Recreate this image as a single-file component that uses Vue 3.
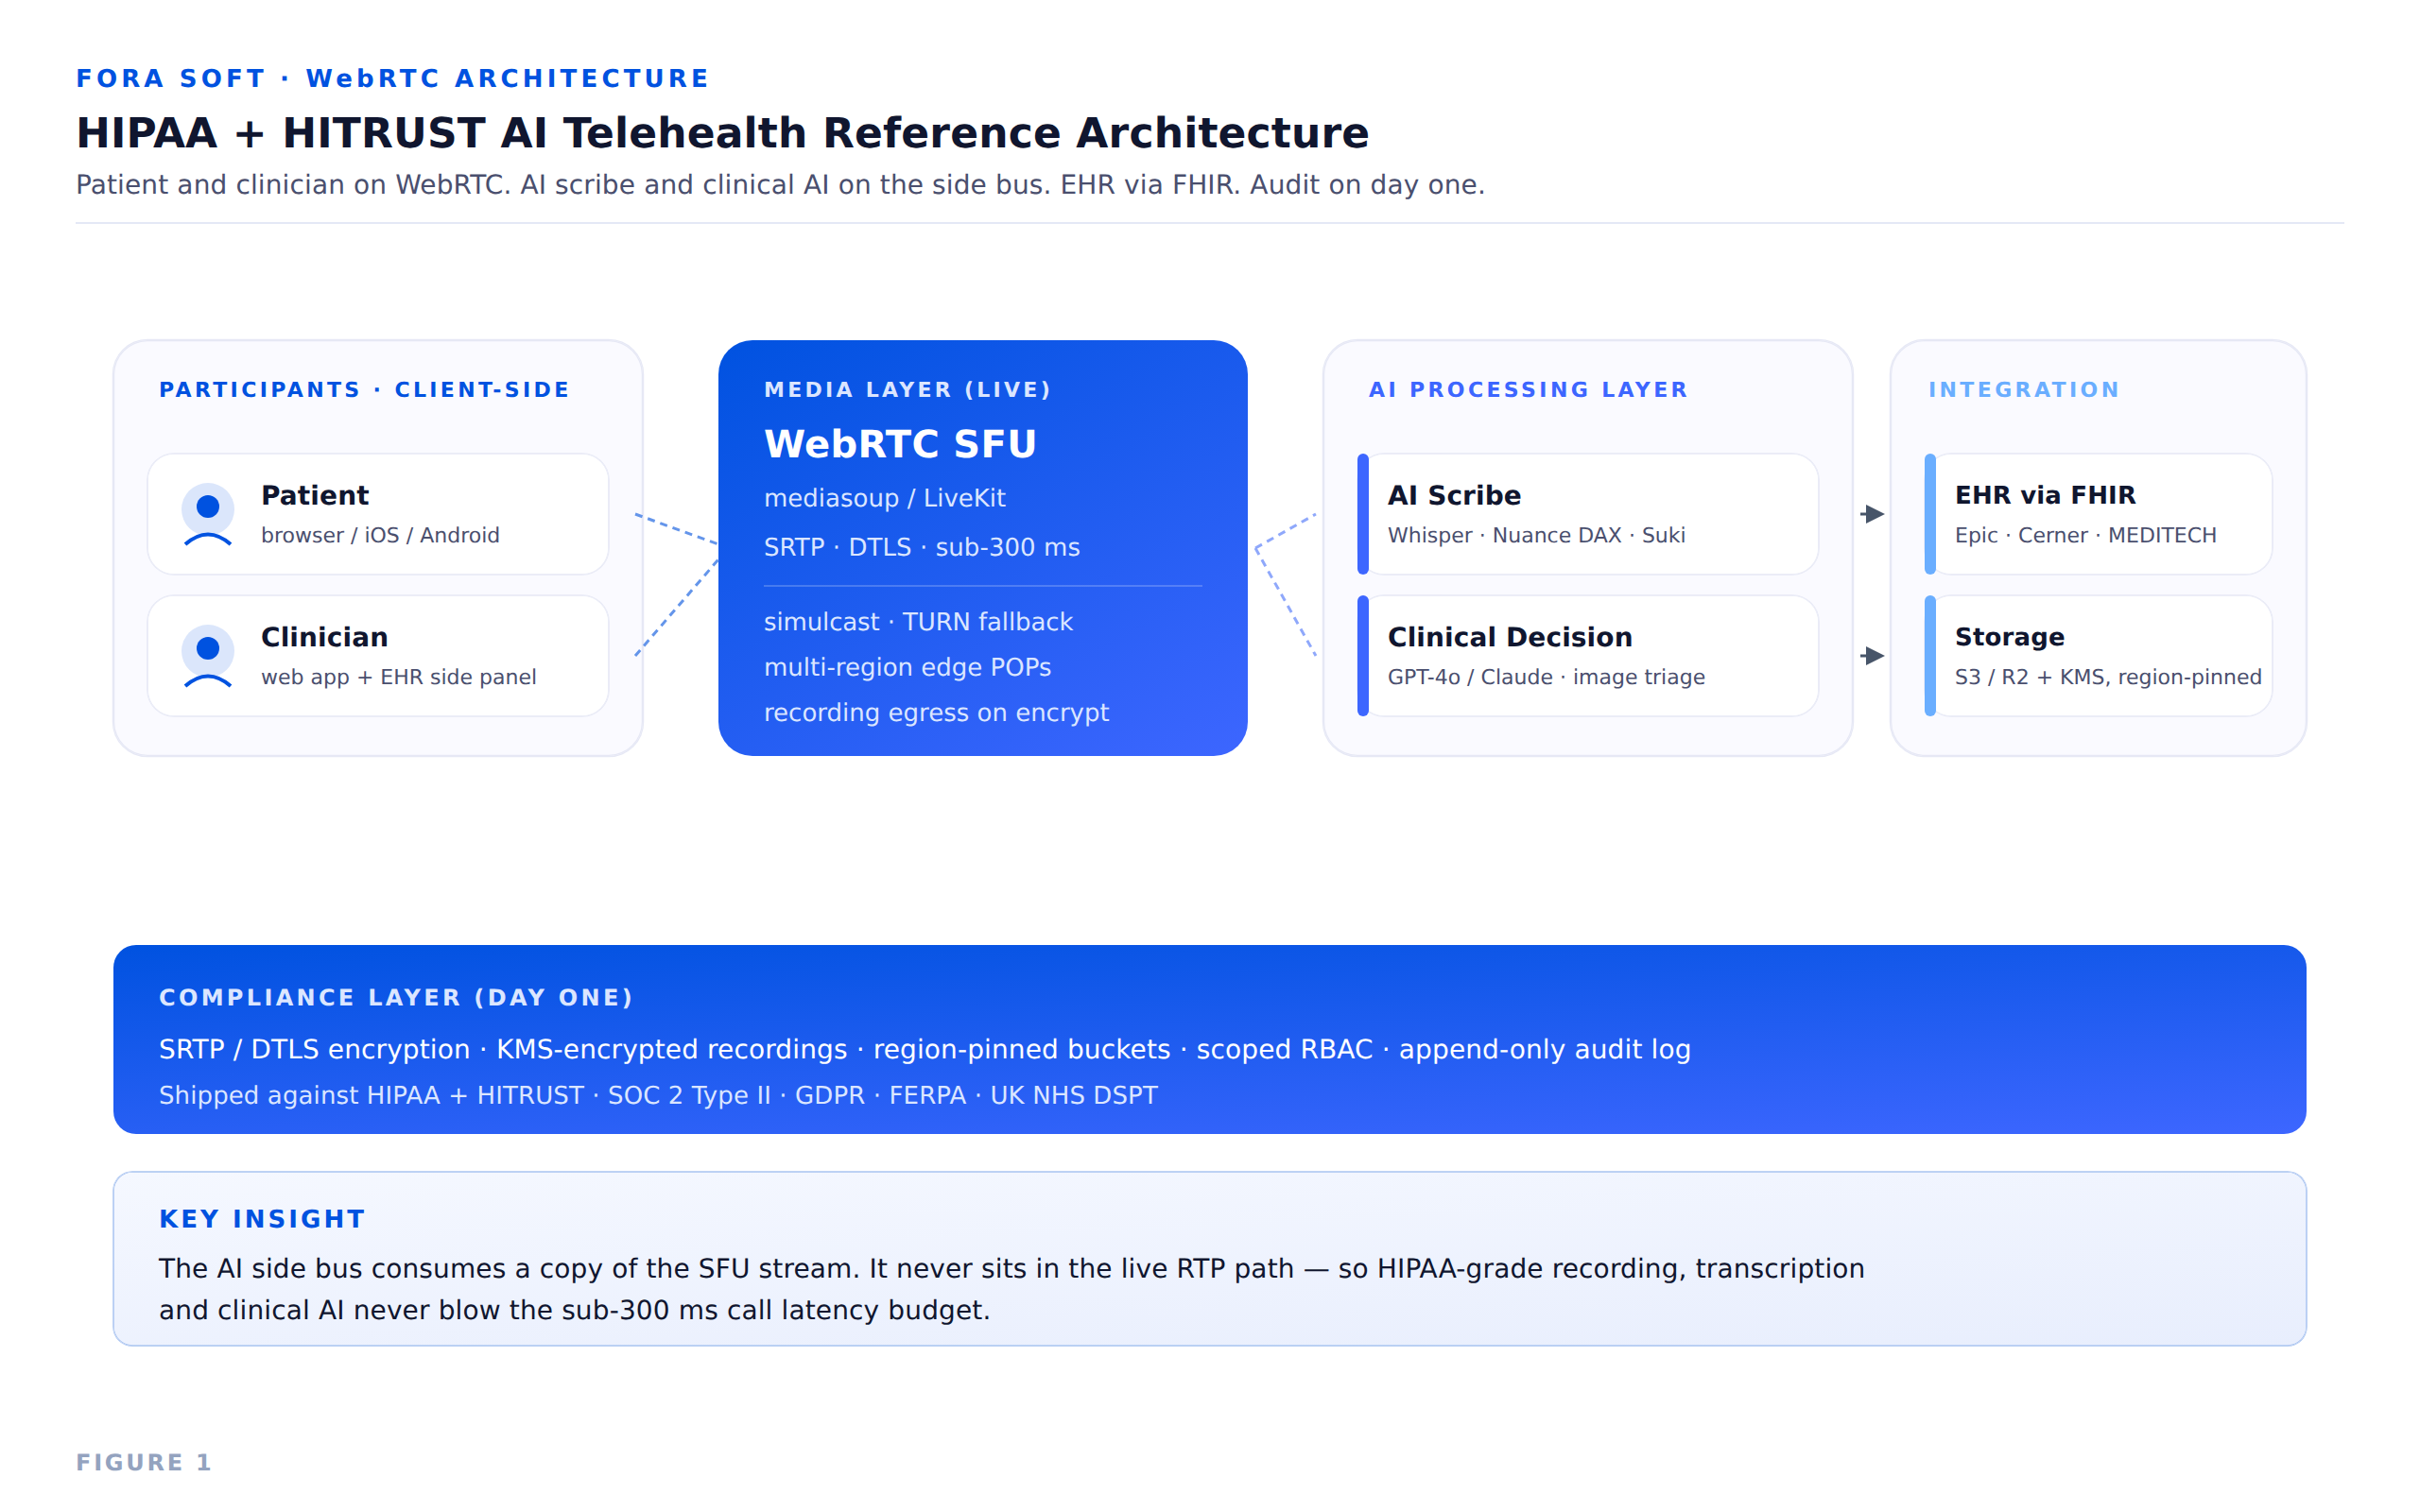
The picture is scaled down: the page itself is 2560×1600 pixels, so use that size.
<script setup>
const participants = [
  { name: 'Patient', sub: 'browser / iOS / Android' },
  { name: 'Clinician', sub: 'web app + EHR side panel' }
]
const aiCards = [
  { name: 'AI Scribe', sub: 'Whisper · Nuance DAX · Suki' },
  { name: 'Clinical Decision', sub: 'GPT-4o / Claude · image triage' }
]
const integrations = [
  { name: 'EHR via FHIR', sub: 'Epic · Cerner · MEDITECH' },
  { name: 'Storage', sub: 'S3 / R2 + KMS, region-pinned' }
]
const arrowRows = [544, 694]
</script>

<template>
  <div class="page">
    <header class="header">
      <div class="eyebrow">FORA SOFT · WebRTC ARCHITECTURE</div>
      <h1 class="title">HIPAA + HITRUST AI Telehealth Reference Architecture</h1>
      <p class="subtitle">Patient and clinician on WebRTC. AI scribe and clinical AI on the side bus. EHR via FHIR. Audit on day one.</p>
    </header>

    <section class="diagram">
      <div class="panel wide">
        <div class="panel-label label-blue">PARTICIPANTS · CLIENT-SIDE</div>
        <div class="card-list">
          <div v-for="p in participants" :key="p.name" class="card person-card">
            <svg class="person-icon" width="56" height="72" viewBox="0 0 56 72">
              <circle cx="28" cy="28" r="28" fill="#dbe6fb" />
              <circle cx="28" cy="25" r="12" fill="#0052e0" />
              <path d="M4 65 Q28 44 52 65" fill="none" stroke="#0052e0" stroke-width="4" />
            </svg>
            <div>
              <div class="card-name">{{ p.name }}</div>
              <div class="card-sub">{{ p.sub }}</div>
            </div>
          </div>
        </div>
      </div>

      <div class="sfu">
        <div class="panel-label sfu-label">MEDIA LAYER (LIVE)</div>
        <div class="sfu-title">WebRTC SFU</div>
        <div class="sfu-line first">mediasoup / LiveKit</div>
        <div class="sfu-line second">SRTP · DTLS · sub-300 ms</div>
        <div class="sfu-rule"></div>
        <div class="sfu-detail tight">simulcast · TURN fallback</div>
        <div class="sfu-detail">multi-region edge POPs</div>
        <div class="sfu-detail">recording egress on encrypt</div>
      </div>

      <div class="panel wide">
        <div class="panel-label label-indigo">AI PROCESSING LAYER</div>
        <div class="card-list">
          <div v-for="c in aiCards" :key="c.name" class="card accent-card accent-indigo">
            <div class="card-name">{{ c.name }}</div>
            <div class="card-sub">{{ c.sub }}</div>
          </div>
        </div>
      </div>

      <div class="panel narrow">
        <div class="panel-label label-sky">INTEGRATION</div>
        <div class="card-list">
          <div v-for="c in integrations" :key="c.name" class="card accent-card accent-sky">
            <div class="card-name">{{ c.name }}</div>
            <div class="card-sub">{{ c.sub }}</div>
          </div>
        </div>
      </div>

      <!-- connectors sit over the panels, coordinates are page pixels -->
      <svg class="connectors" width="2400" height="440" viewBox="80 360 2400 440">
        <g stroke="#6495ea" stroke-width="3" stroke-dasharray="8 6" fill="none">
          <line x1="672" y1="544" x2="760" y2="576" />
          <line x1="672" y1="694" x2="760" y2="592" />
        </g>
        <g stroke="#8fa8fb" stroke-width="3" stroke-dasharray="8 6" fill="none">
          <line x1="1328" y1="580" x2="1392" y2="544" />
          <line x1="1328" y1="580" x2="1392" y2="694" />
        </g>
        <g v-for="y in arrowRows" :key="y">
          <line x1="1968" :y1="y" x2="1976" :y2="y" stroke="#475569" stroke-width="3" />
          <path :d="`M1974 ${y - 10} L1994 ${y} L1974 ${y + 10} Z`" fill="#475569" />
        </g>
      </svg>
    </section>

    <section class="compliance">
      <div class="compliance-title">COMPLIANCE LAYER (DAY ONE)</div>
      <div class="compliance-main">SRTP / DTLS encryption · KMS-encrypted recordings · region-pinned buckets · scoped RBAC · append-only audit log</div>
      <div class="compliance-sub">Shipped against HIPAA + HITRUST · SOC 2 Type II · GDPR · FERPA · UK NHS DSPT</div>
    </section>

    <section class="insight">
      <div class="insight-title">KEY INSIGHT</div>
      <p class="insight-body">The AI side bus consumes a copy of the SFU stream. It never sits in the live RTP path — so HIPAA-grade recording, transcription<br />and clinical AI never blow the sub-300 ms call latency budget.</p>
    </section>

    <footer class="figure">FIGURE 1</footer>
  </div>
</template>

<style scoped>
* {
  box-sizing: border-box;
}

.page {
  width: 2560px;
  height: 1600px;
  padding: 68px 80px 0;
  background: #fff;
  font-family: "DejaVu Sans", sans-serif;
  text-rendering: geometricPrecision;
  overflow: hidden;
}

.header {
  height: 169px;
  border-bottom: 2px solid #e4e8f6;
}

.eyebrow {
  font-size: 26px;
  line-height: 32px;
  font-weight: 700;
  letter-spacing: 4.16px;
  color: #0052e0;
}

.title {
  margin: 14px 0 0;
  font-size: 44px;
  line-height: 56px;
  font-weight: 700;
  letter-spacing: 0.16px;
  color: #10162f;
}

.subtitle {
  margin: 8px 0 0;
  font-size: 28px;
  line-height: 36px;
  letter-spacing: 0.12px;
  color: #4a4f6e;
}

.diagram {
  position: relative;
  display: flex;
  height: 440px;
  margin-top: 123px;
  padding: 0 40px;
}

.panel {
  flex: none;
  height: 440px;
  padding: 40px 36px 0;
  border-radius: 36px;
  background: #fafaff;
  box-shadow: inset 0 0 0 1.25px #e6e8f5, 0 0 0 1.25px #e6e8f5;
}

.wide {
  width: 560px;
}

.narrow {
  width: 440px;
  margin-left: 40px;
}

.panel-label {
  margin-left: 12px;
  font-size: 22px;
  line-height: 28px;
  font-weight: 700;
  letter-spacing: 3.38px;
}

.narrow .panel-label {
  margin-left: 4px;
}

.label-blue { color: #0052e0; }
.label-indigo { color: #3d66ff; }
.label-sky { color: #6aaeff; }

.card-list {
  display: flex;
  flex-direction: column;
  gap: 22px;
  margin-top: 52px;
}

.card {
  position: relative;
  height: 128px;
  border-radius: 28px;
  background: #fff;
  box-shadow: inset 0 0 0 0.8px #e6e8f5, 0 0 0 0.8px #e6e8f5;
}

.person-card {
  display: flex;
  align-items: flex-start;
  padding-top: 28px;
}

.person-icon {
  flex: none;
  margin: 3px 28px 0 36px;
}

.accent-card {
  padding: 28px 0 0 32px;
}

.accent-card::before {
  content: "";
  position: absolute;
  left: 0;
  top: 0;
  width: 12px;
  height: 128px;
  border-radius: 6px;
}

.accent-indigo::before { background: #3d66ff; }
.accent-sky::before { background: #6aaeff; }

.card-name {
  font-size: 28px;
  line-height: 34px;
  font-weight: 700;
  letter-spacing: 0.1px;
  color: #10162f;
}

.narrow .card-name {
  font-size: 26px;
  letter-spacing: 0.15px;
}

.card-sub {
  margin-top: 12px;
  font-size: 22px;
  line-height: 28px;
  color: #4a4f6e;
  white-space: nowrap;
}

.sfu {
  flex: none;
  width: 560px;
  height: 440px;
  margin: 0 80px;
  padding: 40px 48px 0;
  border-radius: 36px;
  background: linear-gradient(152deg, #0052e0, #3d66ff);
  color: #dbe6ff;
}

.sfu-label {
  margin-left: 0;
  letter-spacing: 3.28px;
}

.sfu-title {
  margin-top: 19px;
  font-size: 40px;
  line-height: 48px;
  font-weight: 700;
  letter-spacing: 0.33px;
  color: #fff;
}

.sfu-line {
  font-size: 26px;
  line-height: 32px;
}

.sfu-line.first { margin-top: 17px; }
.sfu-line.second { margin-top: 20px; letter-spacing: 0.07px; }

.sfu-rule {
  height: 2px;
  margin-top: 23px;
  margin-bottom: 14px;
  background: rgba(255, 255, 255, 0.2);
}

.sfu-detail {
  font-size: 26px;
  line-height: 48px;
}

.sfu-detail.tight {
  letter-spacing: -0.13px;
}

.compliance {
  height: 200px;
  margin: 200px 40px 0;
  padding: 41px 48px 0;
  border-radius: 24px;
  background: linear-gradient(177.3deg, #0052e0, #3d66ff);
}

.compliance-title {
  font-size: 24px;
  line-height: 30px;
  font-weight: 700;
  letter-spacing: 3.32px;
  color: #dbe6ff;
}

.compliance-main {
  margin-top: 22px;
  font-size: 28px;
  line-height: 36px;
  letter-spacing: 0.12px;
  color: #fff;
}

.compliance-sub {
  margin-top: 15px;
  font-size: 26px;
  line-height: 32px;
  letter-spacing: 0.11px;
  color: #dbe6ff;
}

.insight {
  height: 184px;
  margin: 40px 40px 0;
  padding: 35px 48px 0;
  border-radius: 20px;
  background: linear-gradient(177.3deg, #f5f8ff, #e8eefd);
  box-shadow: inset 0 0 0 0.75px #a8c3f0, 0 0 0 0.75px #a8c3f0;
}

.insight-title {
  font-size: 26px;
  line-height: 32px;
  font-weight: 700;
  letter-spacing: 3.05px;
  color: #0052e0;
}

.insight-body {
  margin: 14px 0 0;
  font-size: 28px;
  line-height: 44px;
  letter-spacing: 0.13px;
  color: #10162f;
}

.figure {
  margin-top: 109px;
  font-size: 24px;
  line-height: 30px;
  font-weight: 700;
  letter-spacing: 2.76px;
  color: #94a3bf;
}

.connectors {
  position: absolute;
  left: 0;
  top: 0;
  pointer-events: none;
}
</style>
